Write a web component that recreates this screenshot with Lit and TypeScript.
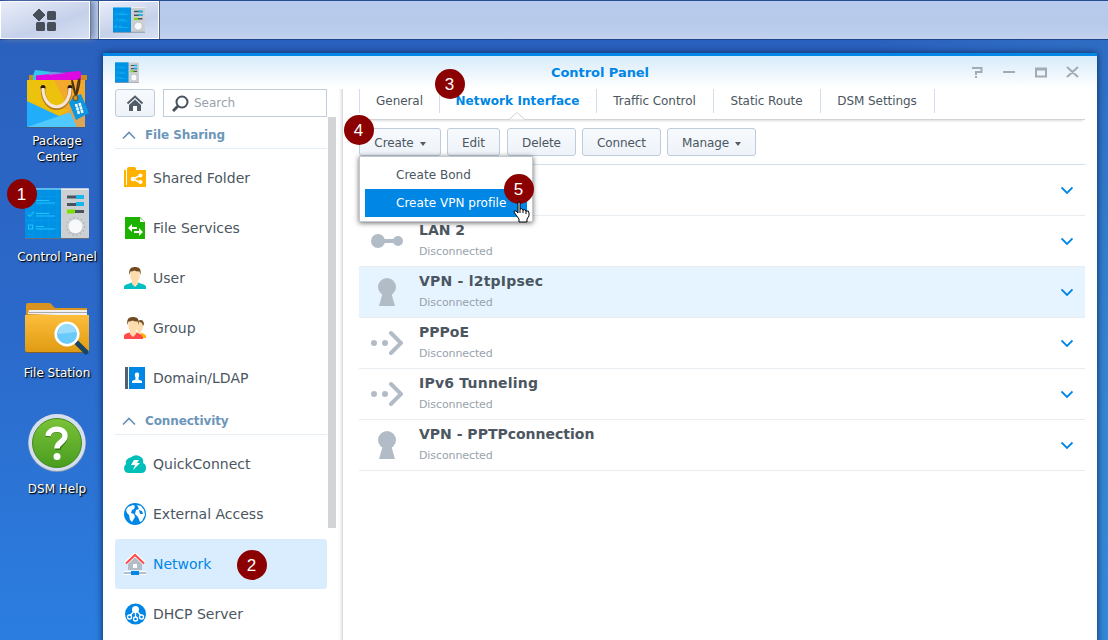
import { LitElement, html, css, svg, nothing } from "lit";
import { customElement } from "lit/decorators.js";

const panelArt = svg`
  <rect x="0" y="0" width="64" height="50" rx="1.5" fill="#ccd0d3"/>
  <path d="M0 1.5Q0 0 1.5 0H36V50H0Z" fill="#0090e4"/>
  <path d="M0 8H36M0 16H36M0 24H36M0 32H36M0 40H36M8 0V50M16 0V50M24 0V50M32 0V50" stroke="#0aa0f0" stroke-width="1" opacity=".5"/>
  <path d="M0 .5H64" stroke="#fff" stroke-width="1.2"/><path d="M0 .5H36" stroke="#23a9ee" stroke-width="1.2"/>
  <path d="M0 50H64" stroke="#65707c" stroke-width="1.2"/>
  <path d="M3 13l2 2 4-5M3 26l2 2 4-5M3.5 36.5h4v4h-4zM11 12h13M11 14.5h19M11 25h13M11 27.5h19M11 38h8M11 40.5h19" stroke="#1cc4fa" stroke-width="1.1" fill="none"/>
  <path d="M42 7h17v3H42zM42 14.500h17v3H42zM42 21.500h17v3H42z" fill="#49535d"/>
  <path d="M51 6.500h8v4h-8zM51 13.500h8v4h-8z" fill="#19b5ef"/><path d="M42 21h8v4h-8z" fill="#7be000"/>
  <circle cx="50.500" cy="38" r="9" fill="none" stroke="#a4abb1" stroke-width="1.500" stroke-dasharray="1 3"/>
  <circle cx="50.500" cy="39" r="7" fill="#aeb4ba"/><circle cx="50.500" cy="38" r="7" fill="#f7f9fa"/>`;

const icons: Record<string, unknown> = {
  package: svg`<svg width="68" height="64" viewBox="0 0 68 64">
    <path d="M3 8h58v5H3z" fill="#c98e17"/><path d="M7 9L9 3l26 3v7H7z" fill="#35c6ec"/>
    <path d="M10 8.500L53 4q2 0 2 2v7H10z" fill="#dd08e2"/><path d="M23 5l18 1-18 2z" fill="#7d8be0"/>
    <path d="M1 13h58v47H1z" fill="#f0a82f"/><path d="M1 13h27L1 51z" fill="#f2cf0b"/><path d="M1 13h27l14 26-41 5z" fill="#edc20c"/>
    <path d="M28 13h31v22L43 43z" fill="#f3a92c"/><path d="M1 34l36 16v10H1z" fill="#22adfa"/><path d="M1 34l42 9-10 6z" fill="#edbd0c"/><path d="M1 60l47-16 3 16z" fill="#4fc9ff"/><path d="M43 43l16-7v24h-8z" fill="#dca557"/>
    <path d="M1 60.500h58" stroke="#445c79"/><circle cx="17" cy="20.500" r="2.500" fill="#2b1808"/><circle cx="44" cy="20.500" r="2.500" fill="#2b1808"/>
    <path d="M17 22c0 25 27 25 27 0" fill="none" stroke="#b27b1c" stroke-width="4.500"/><path d="M17 21c0 25 27 25 27 0" fill="none" stroke="#f7e6d8" stroke-width="3.200"/>
    <path d="M50 30C43 8 46 7 50 30C57 8 52 4 50 30" fill="none" stroke="#4c3210" stroke-width="1.400"/>
    <path d="M43 36l4-6 8-3 8 19-13 7z" fill="#0c97e0"/><circle cx="49.500" cy="31" r="2.600" fill="#c9942b" stroke="#69481c"/>
    <path d="M50 37l3 10M53.500 36l3 10" stroke="#fff" stroke-width="2.500" stroke-dasharray="3 .6"/></svg>`,
  control: svg`<svg width="64" height="52" viewBox="0 0 64 51">${panelArt}</svg>`,
  mini: svg`<svg width="32" height="26" viewBox="0 0 64 51">${panelArt}</svg>`,
  tiny: svg`<svg width="24" height="21" viewBox="0 0 64 51" preserveAspectRatio="none">${panelArt}</svg>`,
  files: svg`<svg width="66" height="54" viewBox="0 0 66 54"><defs><linearGradient id="fo" x2="0" y2="1"><stop stop-color="#fdbd3b"/><stop offset="1" stop-color="#df9b12"/></linearGradient></defs>
    <path d="M2 13V3q0-2 2-2h21q2 0 3 2l3 3h32v8z" fill="#d99321"/><path d="M4 12l1-4h58v6z" fill="#f1f1f1"/><path d="M5 10.500h58" stroke="#aaa"/>
    <path d="M1 13h64v35q0 2-2 2H3q-2 0-2-2z" fill="url(#fo)"/><path d="M2 50.500h62" stroke="#815f2e"/>
    <path d="M53 41l9 9" stroke="#174565" stroke-width="5" stroke-linecap="round"/><circle cx="43" cy="32" r="11.300" fill="#6acbfa" stroke="#fff" stroke-width="2.500"/><path d="M34 32a9 9 0 0 1 18-2z" fill="#9adcfc"/></svg>`,
  help: svg`<svg width="60" height="60" viewBox="0 0 60 60"><defs><linearGradient id="gr" x2="0" y2="1"><stop stop-color="#7ac238"/><stop offset="1" stop-color="#4a9d20"/></linearGradient></defs>
    <circle cx="30" cy="30" r="29" fill="#8b9bb4"/><circle cx="30" cy="29.500" r="28.500" fill="#d5dfef"/><circle cx="30" cy="30" r="24.500" fill="url(#gr)" stroke="#47891f"/>
    <path d="M22 23c1-10 17-9 17 0c0 6-7 6-7 13" fill="none" stroke="#347415" stroke-width="5.500" transform="translate(-1 1)"/><path d="M21 23c1-9 17-9 17 0c0 6-8 6-8 12.500" fill="none" stroke="#fff" stroke-width="5.500"/><circle cx="30" cy="43.500" r="3.500" fill="#fff"/></svg>`,
  shared: svg`<svg width="22" height="22" viewBox="0 0 22 22"><path d="M0 3h2v15h-2zM3 2V20H22V3H12V1.500Q12 0 10.500 0H5Q3 0 3 2z" fill="#ffb300"/><path d="M0 18h22v2H0z" fill="#ffb300"/><path d="M17 8l-8 4 8 4" fill="none" stroke="#fff" stroke-width="1.400"/><circle cx="9" cy="12" r="2.300" fill="#fff"/><circle cx="16.500" cy="8.500" r="2" fill="#fff"/><circle cx="16.500" cy="15" r="2" fill="#fff"/></svg>`,
  services: svg`<svg width="22" height="22" viewBox="0 0 22 22"><path d="M1 0h15l5 5v17H1z" fill="#1db100"/><path d="M16 1v4h5z" fill="#fff"/><path d="M4 11l4-4v3h5v2H8v3zM19 15l-4-4v3h-5v2h5v3z" fill="#fff"/></svg>`,
  user: svg`<svg width="22" height="22" viewBox="0 0 22 22"><path d="M0 22v-2q0-2 4-3l5-2h4l5 2q4 1 4 3v2z" fill="#00bfc2"/><path d="M8 12h6v5l-3 3-3-3z" fill="#ffdcae"/><ellipse cx="11" cy="8.500" rx="4.800" ry="7" fill="#ffdcae"/><path d="M5.500 8C4 0 9 0 11 0s7 0 5.500 8L15.500 4.500q-4 0-5-1-2 1-4 1z" fill="#714a20"/></svg>`,
  group: svg`<svg width="22" height="22" viewBox="0 0 22 22"><path d="M17 21v-5q5 1 5 3.500V21z" fill="#ffb300"/><path d="M14 4h5v5q0 4-2 5v3h-4z" fill="#ffdcae"/><path d="M14 4q5-3 6 3l-1 2-1-3z" fill="#714a20"/><path d="M0 22v-3q0-2 4-3l4-1h3l5 2q3 1 3 5z" fill="#ff4b4b"/><path d="M6 12h6v5l-3 3-3-3z" fill="#ffdcae"/><ellipse cx="9" cy="8.500" rx="4.700" ry="7" fill="#ffdcae"/><path d="M3.500 8C2 0 7 0 9 0s7 0 5.500 8l-1-3.500q-4 0-5-1-2 1-4 1z" fill="#714a20"/></svg>`,
  domain: svg`<svg width="22" height="22" viewBox="0 0 22 22"><path d="M1 0h3v22H1z" fill="#53606c"/><path d="M5 0h16v22H5z" fill="#0086e5"/><path d="M8 16v-2l3.500-1.500V11Q9.500 5.500 13 5.500T14.500 11v1.500L18 14v2z" fill="#fff"/></svg>`,
  quick: svg`<svg width="22" height="19" viewBox="0 0 22 19"><path d="M5 18Q0 18 0 13q0-2 2-4-1-4 3-6 3-1 4-2 4-2 8 1 3 2 2 6 3 1 3 5 0 5-5 5z" fill="#00bfb8"/><path d="M10 5h5l-2 3h3l-7 7 2-5H7z" fill="#fff"/></svg>`,
  globe: svg`<svg width="22" height="22" viewBox="0 0 22 22"><circle cx="11" cy="11" r="11" fill="#0086e5"/><path d="M4 4l5-2 2 1-1 3-2 1-1 3 3 1 1 3-3 5-2-2-1-5-2-2-1-3zM13 2l4 1 3 4 1 5-3 6-2 1-2-5-3-3 1-4 3-1z" fill="#fff"/><path d="M15 7l3 1 1 3h-3z" fill="#0086e5"/></svg>`,
  network: svg`<svg width="22" height="22" viewBox="0 0 22 22"><path d="M4 10v7h14v-7l-7-6z" fill="#b3bdc8"/><path d="M9 11h4v4H9z" fill="#fff"/><path d="M2 10L11 1.500l9 8.500" stroke="#fff" stroke-width="4" fill="none"/><path d="M2 10.500L11 2l9 8.500" stroke="#ff4b4b" stroke-width="2" fill="none"/><path d="M0 18h22v4H0z" fill="#fff"/><path d="M0 19h22v2H0z" fill="#b3bdc8"/><path d="M7 18h8v4H7z" fill="#0086e5"/></svg>`,
  dhcp: svg`<svg width="22" height="22" viewBox="0 0 22 22"><circle cx="11.500" cy="11" r="10.500" fill="#0086e5"/><path d="M11.500 9v5M9.500 9l-4 4M13.500 9l4 4" stroke="#fff" stroke-width="1.300"/><circle cx="11.500" cy="6.500" r="3.500" fill="#fff"/><g fill="#0086e5" stroke="#fff" stroke-width="1.300"><circle cx="5.500" cy="14" r="2"/><circle cx="11.500" cy="16" r="2"/><circle cx="17.500" cy="14" r="2"/></g></svg>`,
  link: svg`<svg width="32" height="32" viewBox="0 0 32 32"><path d="M8 16h20" stroke="#b2bcc7" stroke-width="4"/><circle cx="7" cy="16" r="7" fill="#b2bcc7"/><circle cx="27" cy="16" r="5" fill="#b2bcc7"/></svg>`,
  key: svg`<svg width="32" height="32" viewBox="0 0 32 32"><circle cx="16" cy="11" r="9" fill="#b2bcc7"/><path d="M12 16h8l4 14H8z" fill="#b2bcc7"/></svg>`,
  arrow: svg`<svg width="32" height="32" viewBox="0 0 32 32"><circle cx="3" cy="16" r="3" fill="#b2bcc7"/><circle cx="14" cy="16" r="3" fill="#b2bcc7"/><path d="M20 6l10 10-10 10" stroke="#b2bcc7" stroke-width="4" stroke-linecap="round" fill="none"/></svg>`,
  home: svg`<svg width="18" height="17" viewBox="0 0 18 17"><path d="M3 10L9 4.500l6 5.500v6H3z" fill="#515d69"/><path d="M7 11h4v5H7z" fill="#fff"/><path d="M1.500 8.500L9 1.500l7.500 7" stroke="#515d69" stroke-width="2" fill="none"/></svg>`,
};

const navOne = [["shared", "Shared Folder"], ["services", "File Services"], ["user", "User"], ["group", "Group"], ["domain", "Domain/LDAP"]];
const navTwo = [["quick", "QuickConnect"], ["globe", "External Access"], ["network", "Network"], ["dhcp", "DHCP Server"]];
const rows = [["link", ""], ["link", "LAN 2"], ["key", "VPN - l2tpIpsec"], ["arrow", "PPPoE"], ["arrow", "IPv6 Tunneling"], ["key", "VPN - PPTPconnection"]];

@customElement("app-root")
export class AppRoot extends LitElement {
  static styles = css`
    :host { display: block; position: relative; width: 1108px; height: 640px; overflow: hidden; font: 12px/16px Verdana, "DejaVu Sans", sans-serif; color: #4b5661;
      background: radial-gradient(ellipse 500px 600px at 1250px 450px, #398fd3, transparent), linear-gradient(#2b61be 40px, #2b69ca 50%, #2b7ee0); }
    * { box-sizing: border-box; }
    svg { display: block; flex: none; }
    .bar { display: flex; height: 40px; background: linear-gradient(#b8cbed, #b7caea 60%, #c1d1ee); border-top: 1px solid #244e91; border-bottom: 1px solid #1c4489; }
    .start, .task { border: 1px solid #fff; background: linear-gradient(160deg, #e9edf8, #c5d1ea 60%, #d8e1f3); display: flex; align-items: center; justify-content: center; }
    .start { width: 90px; box-shadow: 1px 0 #657b9f, 4px 0 6px #7185aa; }
    .task { width: 60px; margin-left: 9px; box-shadow: 1px 0 #536889, -1px 0 #536889; }
    .body { display: flex; height: 600px; }
    .desk { width: 103px; display: flex; flex-direction: column; flex: none; }
    .app { height: 116px; padding-left: 10px; width: 104px; display: flex; flex-direction: column; align-items: center; color: #fff; text-align: center; text-shadow: 1px 1px 1px #000, 1px 1px 2px #0008; }
    .app .pic { height: 68px; display: flex; align-items: center; justify-content: center; margin-bottom: 2px; flex: none; }
    .app.first { height: 121px; padding-top: 23px; }
    .app.first svg { margin: 3px 0 0 6px; }
    .app.control { padding-top: 18px; }
    .app.control svg { margin-top: 2px; }
    .app.files { padding-top: 18px; height: 118px; }
    .app.help { padding-top: 16px; }
    .app.help .pic { padding-bottom: 4px; }
    .window { width: 994px; margin-top: 13px; height: 600px; background: #fff; border-top: 3px solid #0086e5; box-shadow: 0 0 7px #08265a; display: flex; flex-direction: column; flex: none; }
    .head { height: 33px; flex: none; padding: 6px 16px 0 12px; display: grid; grid-template-columns: 110px 1fr 110px; background: linear-gradient(#d7ebfa, #fff 32px); }
    .title { text-align: center; font-weight: bold; font-size: 13px; line-height: 21px; color: #0086e5; letter-spacing: -.06px; padding-left: 4px; }
    .controls { display: flex; justify-content: flex-end; padding-top: 4px; }
    .cols { display: flex; flex: 1; }
    .side { width: 240px; padding-left: 12px; border-right: 1px solid #dcdcdc; box-shadow: inset -3px 0 3px -2px #ddd; display: flex; flex: none; }
    .nav { width: 212px; }
    .search { display: flex; gap: 8px; height: 28px; }
    .home, .btn { border: 1px solid #bfccdb; border-radius: 3px; background: linear-gradient(#f7fafd, #eef3f9); display: flex; align-items: center; justify-content: center; }
    .home { width: 40px; height: 28px; }
    .field { width: 164px; height: 28px; border: 1px solid #bfccdb; display: flex; align-items: center; padding-left: 8px; gap: 5px; color: #98a2ac; }
    .cat { height: 32px; border-bottom: 1px solid #e6eef5; color: #6c96b9; font-weight: bold; display: flex; gap: 9px; padding: 10px 0 0 7px; letter-spacing: -.1px; }
    .items { padding-top: 4px; }
    .item { display: flex; align-items: center; gap: 7px; height: 50px; padding-left: 9px; font-size: 14px; border-radius: 3px; }
    .item > svg { width: 22px; }
    .item.on { background: #d9edff; color: #0086e5; }
    .scroll { width: 8px; height: 411px; margin: 28px 0 0 1px; background: #d3d4d6; }
    .main { width: 726px; margin-left: 16px; }
    .tabs { display: flex; height: 31px; border-bottom: 1px solid #d1d3d6; box-shadow: 0 3px 2px -2px #ddd; }
    .tab { position: relative; height: 24px; border-right: 1px solid #d2deeb; display: flex; align-items: center; justify-content: center; letter-spacing: -.07px; padding-right: 1px; }
    .tab:first-child { border-left: 1px solid #d2deeb; width: 81px; padding-right: 0; }
    .tab.on { width: 157px; color: #0086e5; font-weight: bold; letter-spacing: .08px; }
    .tab:nth-child(3) { width: 117px; } .tab:nth-child(4) { width: 107px; } .tab:nth-child(5) { width: 114px; }
    .notch { position: absolute; left: 69px; top: 23px; }
    .tools { display: flex; height: 45px; gap: 6px; padding-top: 8px; border-bottom: 1px solid #d2deeb; position: relative; }
    .btn { height: 28px; gap: 6px; letter-spacing: -.1px; flex: none; padding-top: 2px; }
    .w1 { width: 82px; } .w2 { width: 53px; } .w3 { width: 69px; margin-left: 1px; } .w4 { width: 79px; } .w5 { width: 89px; }
    .caret { width: 0; height: 0; border: 3.500px solid transparent; border-top: 4px solid #515d69; border-bottom: 0; margin-top: 1px; }
    .row { display: flex; height: 51px; border-bottom: 1px solid #e8edf2; padding: 0 12px; }
    .row.hot { background: #e6f4ff; }
    .row > svg:first-child { margin-top: 9px; }
    .info { flex: 1; padding: 5px 0 0 16px; }
    .name { font-weight: bold; font-size: 14px; line-height: 18px; }
    .name.wide { letter-spacing: .22px; }
    .state { font-size: 11px; line-height: 14px; margin-top: 6px; color: #98a2ac; letter-spacing: -.1px; }
    .chev { margin-top: 21px; }
    .menu { position: absolute; left: 0; top: 36px; width: 174px; height: 66px; background: #fff; border: 1px solid #c0c8d2; box-shadow: 0 1px 5px #333b; padding: 4px 5px; z-index: 2; }
    .opt { height: 28px; padding: 6px 0 0 31px; letter-spacing: .03px; }
    .opt.on { background: #0086e5; color: #fff; }
    .badge { position: absolute; width: 30px; height: 30px; border-radius: 50%; background: #8b0000; color: #fff; font: 17px/31px "Liberation Sans", sans-serif; text-align: center; z-index: 4; }
    .b1 { left: 6.500px; top: 178.500px; } .b2 { left: 236.500px; top: 549.500px; } .b3 { left: 434.500px; top: 68.500px; } .b4 { left: 343.500px; top: 114.500px; } .b5 { left: 503.500px; top: 173.500px; }
    .hand { position: absolute; left: 513px; top: 201px; z-index: 5; }
  `;

  private nav(list: string[][]) {
    return list.map(([icon, label]) => html`<div class="item ${label === "Network" ? "on" : ""}">${icons[icon]}<span>${label}</span></div>`);
  }

  private cat(label: string) {
    return html`<div class="cat"><svg width="14" height="14" viewBox="0 0 14 14"><path d="M1 11.500l6-6 6 6" fill="none" stroke="#6490b5" stroke-width="1.600"/></svg>${label}</div>`;
  }

  render() {
    return html`
      <div class="bar">
        <div class="start"><svg width="24" height="24" viewBox="0 0 24 24" fill="#454e59"><path d="M6 1l6 6-6 6-6-6z" stroke="#454e59" stroke-linejoin="round"/><rect x="14" y="3" width="9" height="9" rx="1.500"/><rect x="3" y="14" width="9" height="9" rx="1.500"/><rect x="14" y="14" width="9" height="9" rx="1.500"/></svg></div>
        <div class="task">${icons.mini}</div>
      </div>
      <div class="body">
        <div class="desk">
          <div class="app first"><div class="pic">${icons.package}</div><span>Package<br>Center</span></div>
          <div class="app control"><div class="pic">${icons.control}</div><span>Control Panel</span></div>
          <div class="app files"><div class="pic">${icons.files}</div><span>File Station</span></div>
          <div class="app help"><div class="pic">${icons.help}</div><span>DSM Help</span></div>
        </div>
        <div class="window">
          <div class="head">
            <div>${icons.tiny}</div>
            <div class="title">Control Panel</div>
            <div class="controls"><svg width="109" height="14" viewBox="0 0 109 14" fill="none" stroke="#a2abb5" stroke-width="2"><path d="M0 2H9.500V6H4V9M4 10v2M31 6H43M64 2.500H74V10.500H64zM64 3.500H74M95 1l11 10M106 1L95 11"/></svg></div>
          </div>
          <div class="cols">
            <div class="side">
              <div class="nav">
                <div class="search"><div class="home">${icons.home}</div><div class="field"><svg width="17" height="17" viewBox="0 0 17 17" fill="none" stroke="#47525d" stroke-width="2"><circle cx="10" cy="7" r="5.500"/><path d="M6 11l-5 5" stroke-width="3"/></svg>Search</div></div>
                ${this.cat("File Sharing")}
                <div class="items">${this.nav(navOne)}</div>
                ${this.cat("Connectivity")}
                <div class="items">${this.nav(navTwo)}</div>
              </div>
              <div class="scroll"></div>
            </div>
            <div class="main">
              <div class="tabs">
                <div class="tab">General</div>
                <div class="tab on">Network Interface<svg class="notch" width="16" height="8" viewBox="0 0 16 8"><path d="M0 7.500L8 .5l8 7" fill="#fff" stroke="#d1d3d6"/></svg></div>
                <div class="tab">Traffic Control</div><div class="tab">Static Route</div><div class="tab">DSM Settings</div>
              </div>
              <div class="tools">
                <div class="btn w1">Create<i class="caret"></i></div><div class="btn w2">Edit</div><div class="btn w3">Delete</div><div class="btn w4">Connect</div><div class="btn w5">Manage<i class="caret"></i></div>
                <div class="menu"><div class="opt">Create Bond</div><div class="opt on">Create VPN profile</div></div>
              </div>
              ${rows.map(([icon, name], i) => html`<div class="row ${i === 2 ? "hot" : ""}">${icons[icon]}<div class="info">${name ? html`<div class="name ${name.includes("Ip") || name.includes("IP") ? "wide" : ""}">${name}</div><div class="state">Disconnected</div>` : nothing}</div><svg class="chev" width="12" height="9" viewBox="0 0 12 9"><path d="M.5 1.500L6 7l5.500-5.500" fill="none" stroke="#0086e5" stroke-width="1.800"/></svg></div>`)}
            </div>
          </div>
        </div>
      </div>
      <div class="badge b1">1</div><div class="badge b2">2</div><div class="badge b3">3</div><div class="badge b4">4</div><div class="badge b5">5</div>
      <svg class="hand" width="18" height="22" viewBox="0 0 18 22"><path d="M5 12V2Q5 1 6 1t1 1v6q2-1 3 1 2-1 3 1 3-1 3 2v3l-2 3v3H6v-3l-3-4-2-3q0-2 2-1l2 2" fill="#fff" stroke="#000"/><path d="M7 8v4M10 9v3M13 10v3" stroke="#000" fill="none"/></svg>
    `;
  }
}
